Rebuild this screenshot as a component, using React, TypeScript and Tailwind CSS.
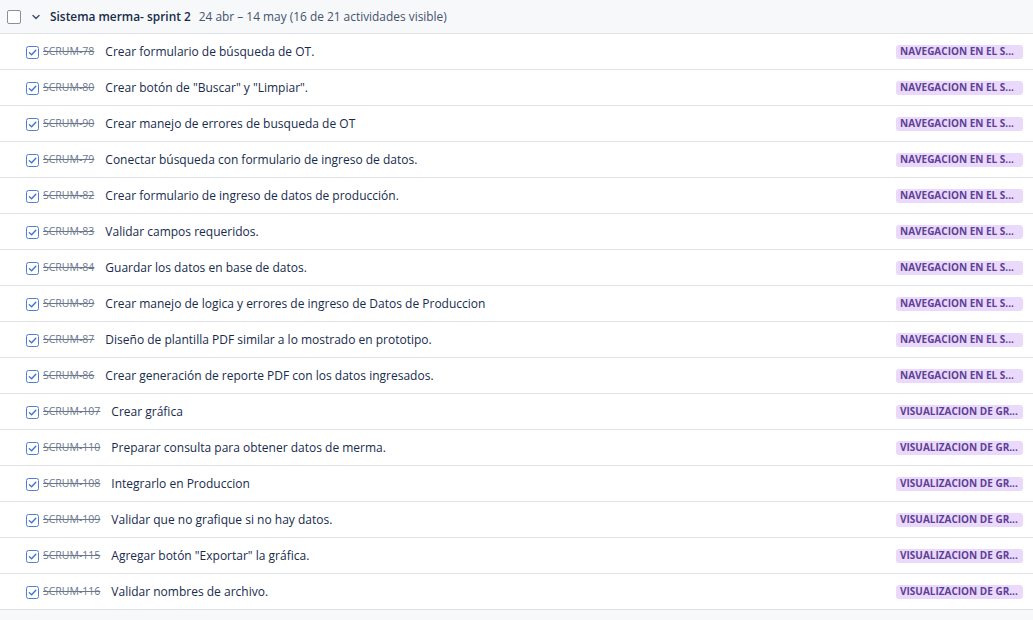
import React from "react";

const rows: [string, string, string][] = [
  ["SCRUM-78", "Crear formulario de búsqueda de OT.", "NAVEGACION EN EL S..."],
  ["SCRUM-80", 'Crear botón de "Buscar" y "Limpiar".', "NAVEGACION EN EL S..."],
  ["SCRUM-90", "Crear manejo de errores de busqueda de OT", "NAVEGACION EN EL S..."],
  ["SCRUM-79", "Conectar búsqueda con formulario de ingreso de datos.", "NAVEGACION EN EL S..."],
  ["SCRUM-82", "Crear formulario de ingreso de datos de producción.", "NAVEGACION EN EL S..."],
  ["SCRUM-83", "Validar campos requeridos.", "NAVEGACION EN EL S..."],
  ["SCRUM-84", "Guardar los datos en base de datos.", "NAVEGACION EN EL S..."],
  ["SCRUM-89", "Crear manejo de logica y errores de ingreso de Datos de Produccion", "NAVEGACION EN EL S..."],
  ["SCRUM-87", "Diseño de plantilla PDF similar a lo mostrado en prototipo.", "NAVEGACION EN EL S..."],
  ["SCRUM-86", "Crear generación de reporte PDF con los datos ingresados.", "NAVEGACION EN EL S..."],
  ["SCRUM-107", "Crear gráfica", "VISUALIZACION DE GR..."],
  ["SCRUM-110", "Preparar consulta para obtener datos de merma.", "VISUALIZACION DE GR..."],
  ["SCRUM-108", "Integrarlo en Produccion", "VISUALIZACION DE GR..."],
  ["SCRUM-109", "Validar que no grafique si no hay datos.", "VISUALIZACION DE GR..."],
  ["SCRUM-115", 'Agregar botón "Exportar" la gráfica.', "VISUALIZACION DE GR..."],
  ["SCRUM-116", "Validar nombres de archivo.", "VISUALIZACION DE GR..."],
];

function CheckIcon() {
  return (
    <svg width="13" height="13" viewBox="0 0 13 13" className="shrink-0">
      <rect x="0.5" y="0.5" width="12" height="12" rx="2" fill="#fff" stroke="#4c7fd9" />
      <path d="M3.3 6.6 L5.6 8.8 L9.8 4.2" fill="none" stroke="#3a6fcf" strokeWidth="1.3" strokeLinecap="round" strokeLinejoin="round" />
    </svg>
  );
}

export default function App() {
  return (
    <div
      className="w-[1033px] h-[620px] bg-[#f7f8f9] overflow-hidden text-[#172b4d]"
      style={{ fontFamily: '"Open Sans", "Noto Sans", sans-serif' }}
    >
      <div className="h-[34px] flex items-center border-b border-[#dfe1e6] bg-[#f7f8f9]">
        <div className="ml-[7px] w-[14px] h-[14px] border border-[#8590a2] rounded-[2px] bg-white" />
        <svg width="10" height="10" viewBox="0 0 10 10" className="ml-[10px]">
          <path d="M2 3.5 L5 6.5 L8 3.5" fill="none" stroke="#44546f" strokeWidth="1.5" strokeLinecap="round" strokeLinejoin="round" />
        </svg>
        <span className="ml-[9px] text-[11.9px] font-semibold text-[#172b4d]">Sistema merma- sprint 2</span>
        <span className="ml-[8px] text-[11.9px] text-[#44546f]">24 abr – 14 may (16 de 21 actividades visible)</span>
      </div>
      <div className="bg-white">
        {rows.map(([key, title, epic]) => (
          <div key={key} className="h-[36px] flex items-center border-b border-[#dfe1e6]">
            <div className="ml-[26px] pt-[1px]">
              <CheckIcon />
            </div>
            <span className="ml-[4px] pt-[1px] text-[10.5px] text-[#6b778c] line-through">{key}</span>
            <span className="ml-[11px] pt-[1px] text-[12px] text-[#172b4d] flex-1 truncate">{title}</span>
            <span className="mr-[10px] w-[127px] h-[14px] flex items-center pl-[4px] rounded-[3px] bg-[#ead9fb] text-[10px] font-bold text-[#5e3f96] whitespace-nowrap overflow-hidden">
              {epic}
            </span>
          </div>
        ))}
      </div>
    </div>
  );
}
